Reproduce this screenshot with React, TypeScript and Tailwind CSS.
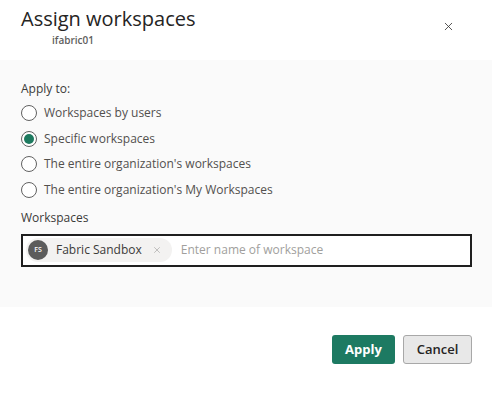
import { X } from 'lucide-react'

const options = [
  'Workspaces by users',
  'Specific workspaces',
  "The entire organization's workspaces",
  "The entire organization's My Workspaces",
]

function Radio({ checked }: { checked: boolean }) {
  return (
    <span className="flex h-[16px] w-[16px] items-center justify-center rounded-full border border-[#616161] bg-white">
      {checked && <span className="h-[10px] w-[10px] rounded-full bg-[#1d7a5f]" />}
    </span>
  )
}

export default function App() {
  return (
    <div className="h-[408px] w-[504px] bg-white font-['Open_Sans',sans-serif] text-[#323130]">
      {/* Header */}
      <div className="relative h-[60px] pl-[21px] pt-[4px]">
        <h1 className="text-[20px] leading-[30px] text-[#252423]">Assign workspaces</h1>
        <p className="ml-[31px] text-[10px] font-semibold leading-[12px] text-[#605e5c]">ifabric01</p>
        <button className="absolute right-[49px] top-[20px] text-[#323130]">
          <X className="h-[13px] w-[13px]" strokeWidth={1.5} />
        </button>
      </div>

      {/* Body */}
      <div className="mr-[12px] h-[247px] bg-[#fafafa] px-[21px] pt-[20px]">
        <p className="text-[12px] leading-[18px] text-[#3b3a39]">Apply to:</p>
        <div className="mt-[6px] flex flex-col gap-[7.5px]">
          {options.map((o, i) => (
            <label key={o} className="flex h-[18px] items-center gap-[7px]">
              <Radio checked={i === 1} />
              <span className="text-[12px] text-[#52504e]">{o}</span>
            </label>
          ))}
        </div>
        <p className="mt-[10px] text-[12px] leading-[18px] text-[#3b3a39]">Workspaces</p>
        <div className="mt-[7px] flex h-[33px] w-[451px] items-center gap-[9px] border-2 border-[#1f1f1f] bg-white px-[3px]">
          <div className="flex h-[24px] items-center rounded-full bg-[#f3f2f1] pl-[2px] pr-[10px]">
            <span className="flex h-[20px] w-[20px] items-center justify-center rounded-full bg-[#5c5c5c] text-[7px] font-semibold text-white">
              FS
            </span>
            <span className="ml-[8px] text-[12px] text-[#3b3a39]">Fabric Sandbox</span>
            <X className="ml-[10px] h-[10px] w-[10px] text-[#a19f9d]" strokeWidth={1.5} />
          </div>
          <input
            className="flex-1 bg-transparent text-[12px] text-[#323130] outline-none placeholder:text-[#a19f9d]"
            placeholder="Enter name of workspace"
          />
        </div>
      </div>

      {/* Footer */}
      <div className="flex justify-end gap-[8px] pr-[32px] pt-[28px]">
        <button className="h-[29px] w-[63px] rounded-[3px] bg-[#1d7a62] text-[13px] font-bold text-white">
          Apply
        </button>
        <button className="h-[29px] w-[69px] rounded-[3px] border border-[#a8a8a8] bg-[#e8e8e8] text-[13px] font-semibold text-[#252423]">
          Cancel
        </button>
      </div>
    </div>
  )
}
